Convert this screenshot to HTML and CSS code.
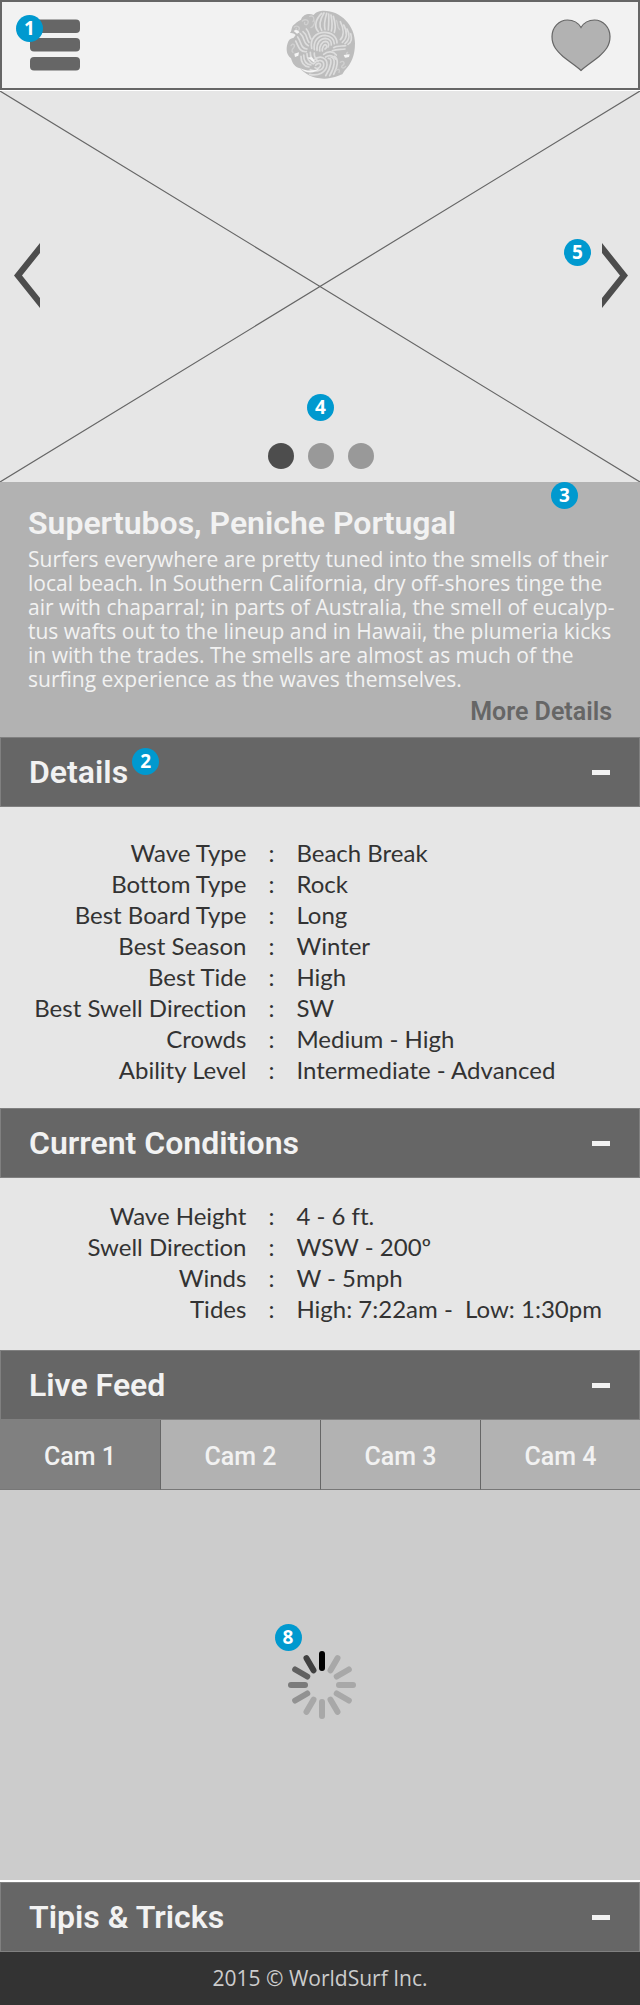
FILE: index.html
```
<!DOCTYPE html>
<html lang="en">
<head>
<meta charset="utf-8">
<meta name="viewport" content="width=device-width, initial-scale=1">
<title>WorldSurf</title>
<link rel="stylesheet" href="styles.css">
</head>
<body>
<header class="topbar">
  <button class="icon-btn menu" aria-label="Menu">
    <svg width="50" height="52" viewBox="0 0 50 52"><g fill="#666"><rect y="0.5" width="50" height="13.5" rx="4"/><rect y="19" width="50" height="13.5" rx="4"/><rect y="38" width="50" height="13.5" rx="4"/></g></svg>
  </button>
  <a class="logo" href="#" aria-label="WorldSurf home">
    <svg width="80" height="80" viewBox="0 0 240 240" fill="none" stroke-linecap="round">
      <path fill="#bdbdbd" d="M128 17C180 17 222 62 222 115C222 150 212 176 190 198L184 208C172 212 152 222 128 221C95 221 70 206 57 190C42 188 34 175 30 160C15 150 15 128 20 115C22 105 28 100 38 98L44 90C38 84 30 84 27 84C34 76 30 66 38 60C44 55 50 48 60 44C66 28 84 24 98 30C104 20 118 17 128 17Z"/>
      <g stroke="#dedede" stroke-width="5">
        <path d="M92 130C86 100 106 82 130 82C152 82 168 96 168 114"/>
        <path d="M100 134C96 108 112 91 132 91C150 92 160 104 160 116"/>
        <path d="M108 136C106 114 118 100 133 100C146 101 152 110 151 120"/>
        <path d="M116 138C114 122 124 109 134 109C142 110 146 118 141 126"/>
        <path d="M124 138C123 128 128 119 134 119C139 121 138 128 132 132"/>
        <path d="M112 80C98 66 104 42 122 25"/><path d="M122 76C112 60 118 42 129 24"/><path d="M132 74C128 58 132 42 137 25"/><path d="M142 75C143 60 144 44 143 27"/><path d="M151 78C154 66 154 50 150 30"/><path d="M160 82C164 72 163 54 157 34"/>
        <path d="M178 104C190 92 188 70 178 50"/><path d="M184 112C200 98 198 78 188 60"/><path d="M192 116C207 104 206 86 198 72"/><path d="M201 118C213 110 213 98 209 86"/>
        <path d="M82 122C66 116 72 98 58 86"/><path d="M84 112C76 104 80 90 66 80"/><path d="M90 102C84 94 86 82 76 72"/><path d="M78 132C58 130 62 112 50 96"/><path d="M76 140C54 142 52 122 44 108"/>
        <path d="M84 186C66 184 60 170 60 154"/><path d="M90 180C74 178 68 166 68 150"/><path d="M96 176C82 170 78 160 78 146"/><path d="M103 172C92 166 88 154 88 142"/><path d="M111 169C102 160 99 150 100 144"/>
        <path d="M98 166C116 148 140 158 138 180C136 202 112 214 86 208"/>
        <path d="M98 176C112 160 130 166 128 182C126 196 106 202 88 194"/>
        <path d="M104 181C112 170 122 176 118 184C114 190 108 192 102 188"/>
        <path d="M142 160C156 158 150 188 134 212"/><path d="M150 156C166 160 160 188 146 212"/><path d="M160 154C174 162 170 186 158 208"/>
        <path d="M128 148C142 136 158 140 166 150"/><path d="M134 156C146 148 158 152 164 162"/>
        <path d="M158 128C168 122 184 124 194 122"/><path d="M154 137C168 132 180 134 192 132"/>
      </g>
      <g stroke="#d0d0d0" stroke-width="4">
        <path d="M40 66C48 60 58 66 54 74C50 80 42 76 46 70"/><path d="M64 48C74 40 86 46 80 56C76 62 68 58 71 52"/><path d="M86 34C98 30 102 42 96 50"/><path d="M30 122C36 112 44 120 38 128C34 132 30 138 36 142"/><path d="M102 48C100 58 96 66 90 68"/><path d="M166 46C172 54 166 64 176 74"/><path d="M200 142C190 146 206 150 196 156"/><path d="M178 172C188 164 194 176 184 182C178 186 186 194 194 184"/><path d="M166 196C172 190 178 194 174 202"/>
      </g>
      <path fill="#f5f5f5" d="M56 188C72 198 96 200 116 190C102 206 76 208 56 188ZM40 146L54 142L52 152L42 156ZM38 78C44 72 52 76 56 82L48 86ZM188 150L206 148L204 156L192 158ZM78 158L92 156C98 162 102 168 98 172C90 164 84 160 78 158Z"/>
    </svg>
  </a>
  <button class="icon-btn favorite" aria-label="Add to favorites">
    <svg width="60" height="53" viewBox="0 0 60 53"><path d="M30 8.5C27 3.5 22 1 16.500 1C8 1 1 8.500 1 17.500C1 27 6 32 12 37.500C18 42.500 25 47 30 51.500C35 47 42 42.500 48 37.500C54 32 59 27 59 17.500C59 8.500 52 1 43.500 1C38 1 33 3.500 30 8.500Z" fill="#b2b2b2" stroke="#666" stroke-width="1.200"/></svg>
  </button>
  <span class="badge badge-menu">1</span>
</header>

<main>
  <section class="hero" aria-label="Photos">
    <svg class="cross" viewBox="0 0 640 391" preserveAspectRatio="none" stroke="#666" stroke-width="1.200"><path d="M0 0L640 391M640 0L0 391"/></svg>
    <button class="icon-btn prev" aria-label="Previous photo"><svg width="26" height="65" viewBox="0 0 26 65"><path fill="#4d4d4d" d="M26 0V10L8 32.500L26 55V65L0 32.500Z"/></svg></button>
    <button class="icon-btn next" aria-label="Next photo"><svg width="26" height="65" viewBox="0 0 26 65"><path fill="#4d4d4d" d="M0 0V10L18 32.500L0 55V65L26 32.500Z"/></svg></button>
    <div class="dots">
      <button class="dot current" aria-label="Photo 1"></button>
      <button class="dot" aria-label="Photo 2"></button>
      <button class="dot" aria-label="Photo 3"></button>
    </div>
    <span class="badge badge-dots">4</span>
    <span class="badge badge-next">5</span>
  </section>

  <section class="intro">
    <h1>Supertubos, Peniche Portugal</h1>
    <p>Surfers everywhere are pretty tuned into the smells of their<br>
      local beach. In Southern California, dry off-shores tinge the<br>
      air with chaparral; in parts of Australia, the smell of eucalyp-<br>
      tus wafts out to the lineup and in Hawaii, the plumeria kicks<br>
      in with the trades. The smells are almost as much of the<br>
      surfing experience as the waves themselves.</p>
    <a class="more" href="#details">More Details</a>
    <span class="badge badge-intro">3</span>
  </section>

  <section id="details">
    <h2><button class="bar" aria-expanded="true"><span class="bar-label">Details<span class="badge badge-details">2</span></span><span class="minus"></span></button></h2>
    <div class="panel">
      <table>
        <tr><th scope="row">Wave Type</th><td class="colon">:</td><td>Beach Break</td></tr>
        <tr><th scope="row">Bottom Type</th><td class="colon">:</td><td>Rock</td></tr>
        <tr><th scope="row">Best Board Type</th><td class="colon">:</td><td>Long</td></tr>
        <tr><th scope="row">Best Season</th><td class="colon">:</td><td>Winter</td></tr>
        <tr><th scope="row">Best Tide</th><td class="colon">:</td><td>High</td></tr>
        <tr><th scope="row">Best Swell Direction</th><td class="colon">:</td><td>SW</td></tr>
        <tr><th scope="row">Crowds</th><td class="colon">:</td><td>Medium - High</td></tr>
        <tr><th scope="row">Ability Level</th><td class="colon">:</td><td>Intermediate - Advanced</td></tr>
      </table>
    </div>
  </section>

  <section>
    <h2><button class="bar" aria-expanded="true"><span class="bar-label">Current Conditions</span><span class="minus"></span></button></h2>
    <div class="panel conditions">
      <table>
        <tr><th scope="row">Wave Height</th><td class="colon">:</td><td>4 - 6 ft.</td></tr>
        <tr><th scope="row">Swell Direction</th><td class="colon">:</td><td>WSW - 200º</td></tr>
        <tr><th scope="row">Winds</th><td class="colon">:</td><td>W - 5mph</td></tr>
        <tr><th scope="row">Tides</th><td class="colon">:</td><td>High: 7:22am -&nbsp; Low: 1:30pm</td></tr>
      </table>
    </div>
  </section>

  <section>
    <h2><button class="bar" aria-expanded="true"><span class="bar-label">Live Feed</span><span class="minus"></span></button></h2>
    <div class="tabs" role="tablist">
      <button class="tab" role="tab" aria-selected="true">Cam 1</button>
      <button class="tab" role="tab" aria-selected="false">Cam 2</button>
      <button class="tab" role="tab" aria-selected="false">Cam 3</button>
      <button class="tab" role="tab" aria-selected="false">Cam 4</button>
    </div>
    <div class="feed" role="tabpanel">
      <div class="spinner">
        <svg width="68" height="68" viewBox="-34 -34 68 68" stroke-width="6" stroke-linecap="round" stroke="#a8a8a8" aria-label="Loading">
          <path d="M0-31V-17" stroke="#000"/>
          <path d="M0-31V-17" transform="rotate(30)"/>
          <path d="M0-31V-17" transform="rotate(60)"/>
          <path d="M0-31V-17" transform="rotate(90)"/>
          <path d="M0-31V-17" transform="rotate(120)"/>
          <path d="M0-31V-17" transform="rotate(150)"/>
          <path d="M0-31V-17" transform="rotate(180)"/>
          <path d="M0-31V-17" transform="rotate(210)"/>
          <path d="M0-31V-17" transform="rotate(240)" stroke="#929292"/>
          <path d="M0-31V-17" transform="rotate(270)" stroke="#7b7b7b"/>
          <path d="M0-31V-17" transform="rotate(300)" stroke="#606060"/>
          <path d="M0-31V-17" transform="rotate(330)" stroke="#404040"/>
        </svg>
        <span class="badge badge-feed">8</span>
      </div>
    </div>
  </section>

  <section>
    <h2><button class="bar" aria-expanded="true"><span class="bar-label">Tipis &amp; Tricks</span><span class="minus"></span></button></h2>
  </section>
</main>
<footer class="footer">2015 © WorldSurf Inc.</footer>
</body>
</html>
```
FILE: styles.css
```
* { box-sizing: border-box; }
body {
  margin: 0;
  background: #fff;
  color: #333;
  font-family: Roboto, "Liberation Sans", sans-serif;
}
h1, h2, p { margin: 0; }
button { margin: 0; border: 0; font: inherit; color: inherit; cursor: pointer; }
svg { display: block; }
.icon-btn { padding: 0; background: none; }

.topbar {
  position: relative;
  display: grid;
  grid-template-columns: 1fr auto 1fr;
  align-items: center;
  height: 90px;
  margin-bottom: 1px;
  padding: 0 27px 0 28px;
  background: #f2f2f2;
  border: 2px solid #666;
}
.menu { justify-self: start; }
.favorite { justify-self: end; }

.badge {
  position: absolute;
  width: 27px;
  height: 27px;
  border-radius: 50%;
  background: #0099cf;
  color: #fff;
  font: bold 19px/27px "Noto Sans", sans-serif;
  text-align: center;
}
.badge-menu { left: 14px; top: 13px; }
.badge-dots { left: calc(50% - 13px); bottom: 61px; }
.badge-next { right: 49px; top: 148px; }
.badge-intro { right: 62px; top: 0; }
.badge-details { left: calc(100% + 4px); top: -6px; }
.badge-feed { left: -13px; top: -27px; }

.hero {
  position: relative;
  display: flex;
  align-items: center;
  justify-content: space-between;
  aspect-ratio: 640 / 391;
  padding: 0 12px 22px 14px;
  background: #e6e6e6;
}
.cross { position: absolute; inset: 0; width: 100%; height: 100%; }
.prev, .next { position: relative; }
.dots {
  position: absolute;
  left: 2px;
  right: 0;
  bottom: 13px;
  display: flex;
  justify-content: center;
  gap: 14px;
}
.dot { width: 26px; height: 26px; padding: 0; border-radius: 50%; background: #999; }
.dot.current { background: #4d4d4d; }

.intro {
  position: relative;
  display: flex;
  flex-direction: column;
  padding: 25px 16px 11px 28px;
  background: #b2b2b2;
  color: #f2f2f2;
}
.intro h1 { font-size: 32px; line-height: 32px; font-weight: 600; }
.intro p { margin-top: 8px; font: 21px/24px "Open Sans", sans-serif; }
.more {
  align-self: flex-end;
  margin: 7px 12px 0 0;
  color: #666;
  font-size: 25px;
  line-height: 28px;
  font-weight: 600;
  text-decoration: none;
}

.bar {
  display: flex;
  align-items: center;
  justify-content: space-between;
  width: 100%;
  height: 70px;
  padding: 0 29px 0 28px;
  background: #666;
  border: 1px solid #808080;
  color: #f2f2f2;
  font-size: 32px;
  line-height: 36px;
  font-weight: 600;
}
.bar-label { position: relative; }
.minus { width: 18px; height: 5px; background: #f2f2f2; }

.panel { padding: 30px 0 23px; background: #e6e6e6; }
.conditions { padding: 22px 0 26px; }
.panel table {
  width: 100%;
  border-collapse: collapse;
  font: 24px/31px Lato, sans-serif;
  font-variant-ligatures: none;
}
.panel th { width: 38.5%; padding: 0; font-weight: 400; text-align: right; }
.panel td { padding: 0; }
.panel .colon { width: 50px; text-align: center; }

.tabs { display: grid; grid-template-columns: repeat(4, 1fr); }
.tab {
  height: 70px;
  padding: 4px 0 0;
  background: #b2b2b2;
  border-bottom: 1px solid #777;
  color: #f2f2f2;
  font-size: 25px;
  font-weight: 500;
}
.tab + .tab { border-left: 1px solid #666; }
.tab[aria-selected="true"] { background: #808080; }

.feed {
  display: flex;
  align-items: center;
  justify-content: center;
  aspect-ratio: 640 / 390;
  margin-bottom: 2px;
  padding-left: 3px;
  background: #ccc;
}
.spinner { position: relative; }

.footer {
  padding: 11px 0 12px;
  background: #333;
  color: #ccc;
  font: 21px/30px "Open Sans", sans-serif;
  text-align: center;
}
```
